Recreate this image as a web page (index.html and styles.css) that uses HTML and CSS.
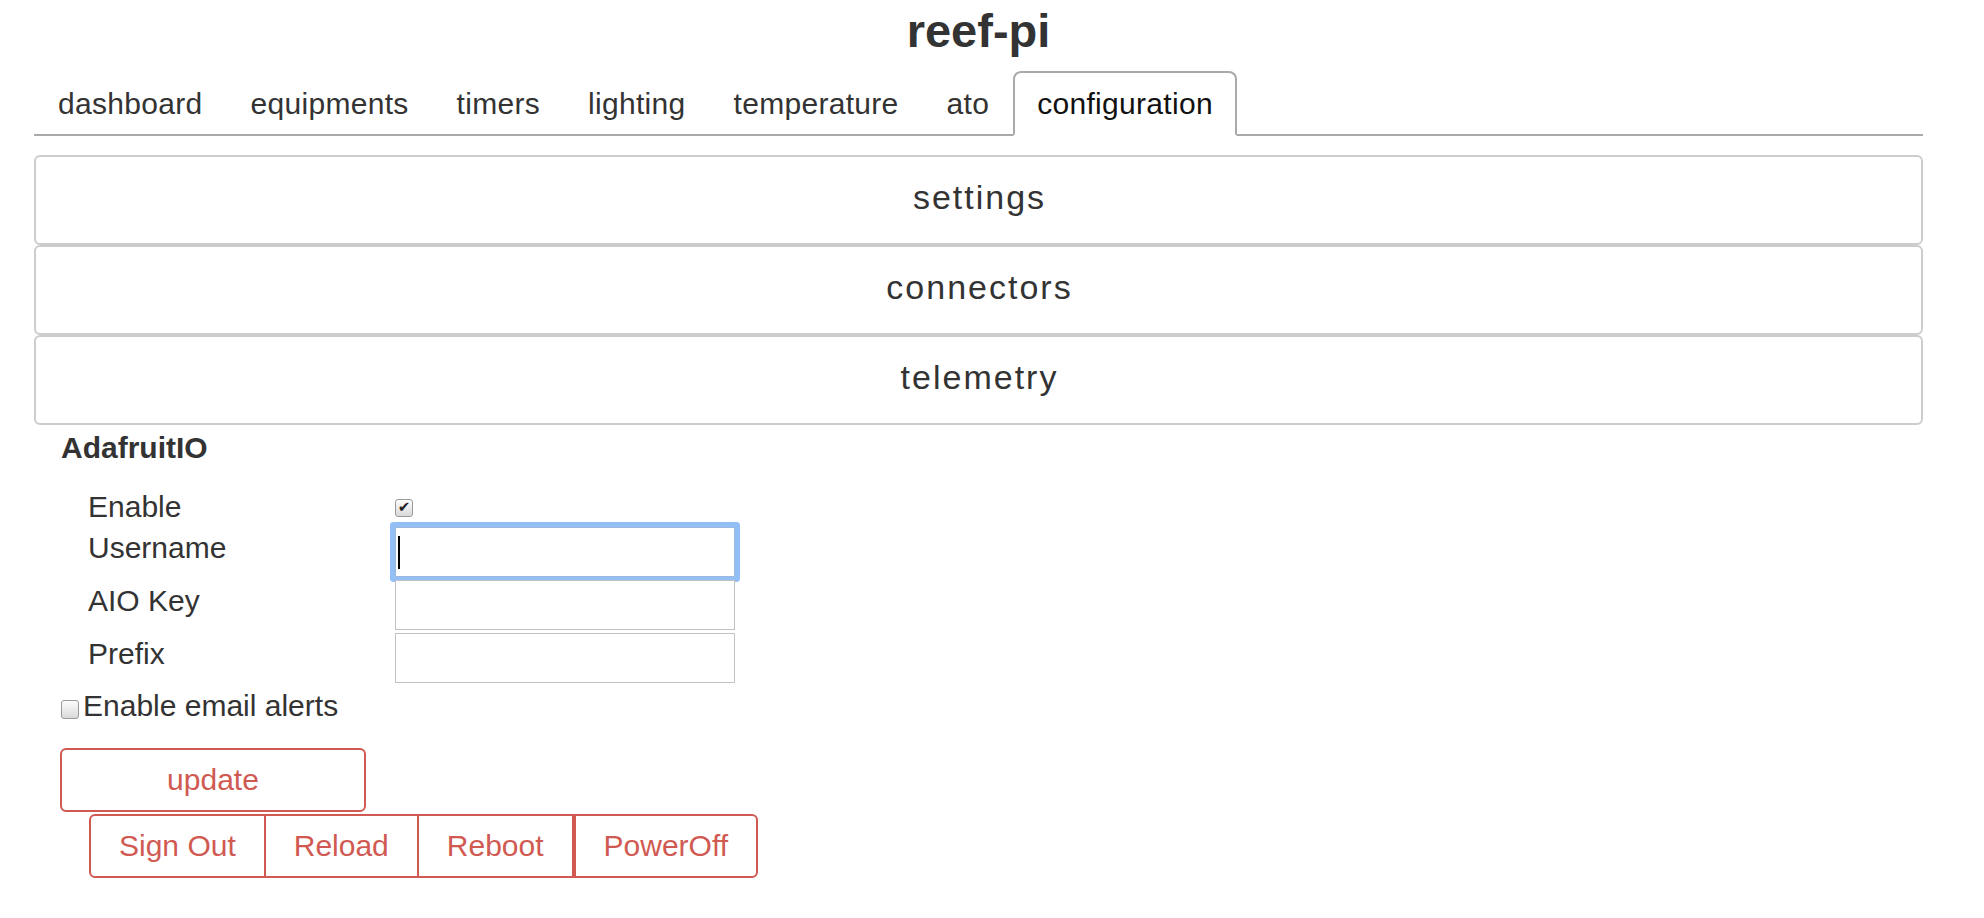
FILE: index.html
```html
<!DOCTYPE html>
<html lang="en">
<head>
<meta charset="utf-8">
<title>reef-pi</title>
<link rel="stylesheet" href="styles.css">
</head>
<body>
<div class="page">
  <h1 class="title">reef-pi</h1>
  <ul class="tabs">
    <li><a class="tab" href="#">dashboard</a></li>
    <li><a class="tab" href="#">equipments</a></li>
    <li><a class="tab" href="#">timers</a></li>
    <li><a class="tab" href="#">lighting</a></li>
    <li><a class="tab" href="#">temperature</a></li>
    <li><a class="tab" href="#">ato</a></li>
    <li><a class="tab active" href="#">configuration</a></li>
  </ul>
  <div class="panels">
    <div class="panel"><span class="panel-title">settings</span></div>
    <div class="panel"><span class="panel-title">connectors</span></div>
    <div class="panel"><span class="panel-title">telemetry</span></div>
  </div>
  <section class="telemetry">
    <h2 class="section-title">AdafruitIO</h2>
    <div class="form-grid">
      <label class="form-label form-label-check">Enable</label>
      <div class="check-cell"><input type="checkbox" class="check" checked></div>
      <label class="form-label">Username</label>
      <div class="input-wrap"><input type="text" class="text-input focused"><span class="caret"></span></div>
      <label class="form-label">AIO Key</label>
      <div class="input-wrap"><input type="text" class="text-input"></div>
      <label class="form-label">Prefix</label>
      <div class="input-wrap"><input type="text" class="text-input"></div>
    </div>
    <label class="email-row"><input type="checkbox" class="check check-email">Enable email alerts</label>
    <button class="btn btn-update" type="button">update</button>
    <div class="btn-group">
      <button class="btn btn-first" type="button">Sign Out</button>
      <button class="btn btn-mid" type="button">Reload</button>
      <button class="btn btn-mid" type="button">Reboot</button>
      <button class="btn btn-last" type="button">PowerOff</button>
    </div>
  </section>
</div>
</body>
</html>
```

FILE: styles.css
```css
body {
  margin: 0;
  background: #fff;
  color: #333;
  font-family: "Liberation Sans", Arial, sans-serif;
}

.page {
  margin-left: 34px;
  width: 1889px;
}

.title {
  margin: 0 0 12px;
  padding-top: 3px;
  font-size: 47px;
  line-height: 56px;
  font-weight: 700;
  text-align: center;
  color: #333;
}

.tabs {
  list-style: none;
  margin: 0;
  padding: 0;
  display: flex;
  border-bottom: 2px solid #aaa;
}

.tab {
  display: block;
  margin-bottom: -2px;
  padding: 0 22px;
  border: 2px solid transparent;
  border-radius: 8px 8px 0 0;
  font-size: 30px;
  line-height: 61px;
  letter-spacing: 0.3px;
  color: #333;
  text-decoration: none;
}

.tab.active {
  border-color: #aaa #aaa #fff;
  background: #fff;
  color: #111;
}

.panels {
  margin-top: 19px;
}

.panel {
  height: 90px;
  box-sizing: border-box;
  border: 2px solid #ccc;
  border-radius: 6px;
  display: flex;
  align-items: center;
  justify-content: center;
  padding-bottom: 7px;
}

.panel-title {
  font-size: 34px;
  line-height: 40px;
  letter-spacing: 2px;
  padding-left: 2px;
  color: #333;
}

.telemetry {
  padding-left: 27px;
}

.section-title {
  margin: 6px 0 0;
  font-size: 30px;
  line-height: 34px;
  font-weight: 700;
  color: #333;
}

.form-grid {
  display: grid;
  grid-template-columns: 307px 340px;
  grid-template-rows: 34px 50px 50px 50px;
  row-gap: 3px;
  margin: 25px 0 0 27px;
}

.form-label {
  font-size: 30px;
  line-height: 34px;
  padding-top: 4px;
  color: #333;
}

.form-label-check {
  padding-top: 1px;
  line-height: 32px;
}

.check-cell {
  display: flex;
  align-items: center;
}

.check {
  appearance: none;
  -webkit-appearance: none;
  box-sizing: border-box;
  width: 18px;
  height: 18px;
  margin: 1px 0 0;
  border: 1px solid #9a9a9a;
  border-radius: 3px;
  background: linear-gradient(#fdfdfd, #d9d9d9);
  display: grid;
  place-content: center;
}

.check:checked::after {
  content: "\2714";
  font-family: "DejaVu Sans", sans-serif;
  font-size: 15px;
  line-height: 1;
  color: #222;
}

.input-wrap {
  position: relative;
  height: 50px;
}

.text-input {
  box-sizing: border-box;
  width: 340px;
  height: 50px;
  margin: 0;
  padding: 0 6px;
  border: 1px solid #c2c2c2;
  border-radius: 0;
  background: #fff;
  font: inherit;
  font-size: 30px;
  outline: none;
}

.text-input.focused {
  border-color: #9db7dc;
  border-radius: 1px;
  box-shadow: 0 0 0 5px #93bff7;
}

.caret {
  position: absolute;
  left: 3px;
  top: 9px;
  width: 2px;
  height: 33px;
  background: #000;
}

.email-row {
  display: flex;
  align-items: center;
  margin-top: 6px;
  font-size: 30px;
  line-height: 34px;
  color: #333;
}

.check-email {
  height: 19px;
  margin: 6px 4px 0 0;
}

.btn {
  box-sizing: border-box;
  height: 64px;
  margin: 0;
  padding: 0 28px;
  border: 2px solid #d05a52;
  border-radius: 6px;
  background: #fff;
  color: #d05a52;
  font-family: "Liberation Sans", Arial, sans-serif;
  font-size: 30px;
  line-height: 1;
  cursor: pointer;
}

.btn-update {
  display: block;
  width: 306px;
  margin: 25px 0 0 -1px;
}

.btn-group {
  display: flex;
  margin: 2px 0 0 28px;
}

.btn-first {
  border-radius: 6px 0 0 6px;
}

.btn-mid {
  margin-left: -2px;
  border-radius: 0;
}

.btn-last {
  border-radius: 0 6px 6px 0;
}
```
